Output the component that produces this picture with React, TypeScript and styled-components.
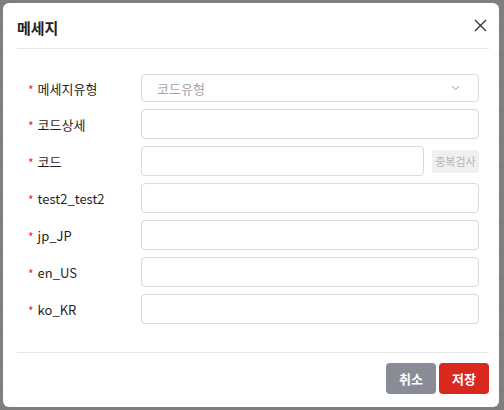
import React from 'react';
import styled, { createGlobalStyle } from 'styled-components';

const GlobalStyle = createGlobalStyle`
  html, body {
    margin: 0;
    padding: 0;
    height: 100%;
  }
  body {
    font-family: "Noto Sans CJK KR", "Noto Sans", sans-serif;
    background: #7d7d7d;
  }
  #root {
    height: 100%;
  }
`;

const Backdrop = styled.div`
  box-sizing: border-box;
  height: 100%;
  padding: 3px 5px 3px 3px;
  background: repeating-linear-gradient(
    to bottom,
    #7f7f7f 0px,
    #7f7f7f 26px,
    #767676 27px,
    #7f7f7f 28px
  );
`;

const Modal = styled.div`
  box-sizing: border-box;
  height: 404px;
  background: #fff;
  border-radius: 6px;
  padding: 0 10px 0 14px;
  display: flex;
  flex-direction: column;
`;

const Header = styled.div`
  height: 45px;
  display: flex;
  align-items: center;
  justify-content: space-between;
  border-bottom: 1px solid #e6e6e9;
`;

const Title = styled.h2`
  margin: 0;
  padding-top: 3px;
  font-size: 15px;
  font-weight: 700;
  color: #222;
`;

const CloseButton = styled.button`
  border: none;
  background: none;
  padding: 0;
  margin: 0 0 1px 0;
  width: 18px;
  height: 18px;
  display: flex;
  align-items: center;
  justify-content: center;
  cursor: pointer;
`;

const Body = styled.div`
  flex: 1;
  padding: 25px 10px 0 0;
  display: flex;
  flex-direction: column;
  gap: 7px;
`;

const Row = styled.div`
  display: flex;
  align-items: center;
`;

const Label = styled.label`
  width: 124px;
  flex-shrink: 0;
  padding-left: 11px;
  box-sizing: border-box;
  font-size: 13px;
  color: #1f1f1f;
  display: flex;
  align-items: center;
`;

const Star = styled.span`
  color: #f5222d;
  font-size: 12px;
  margin-right: 4px;
  position: relative;
  top: 1px;
`;

const Field = styled.div`
  flex: 1;
  display: flex;
  align-items: center;
  gap: 8px;
`;

const Input = styled.input`
  flex: 1;
  min-width: 0;
  box-sizing: border-box;
  height: 30px;
  border: 1px solid #d9d9de;
  border-radius: 4px;
  padding: 0 10px;
  font-family: inherit;
  font-size: 13px;
  outline: none;
`;

const Select = styled.div`
  flex: 1;
  box-sizing: border-box;
  height: 28px;
  border: 1px solid #d9d9de;
  border-radius: 4px;
  padding: 0 18px 0 15px;
  display: flex;
  align-items: center;
  justify-content: space-between;
  font-size: 13px;
  color: #a3a3a8;
`;

const CheckButton = styled.button`
  width: 47px;
  height: 23px;
  border: none;
  border-radius: 3px;
  background: #f0f0f2;
  color: #b4b4b8;
  font-family: inherit;
  font-size: 11px;
  padding: 0;
`;

const Footer = styled.div`
  border-top: 1px solid #e6e6e9;
  height: 55px;
  display: flex;
  justify-content: flex-end;
  align-items: flex-start;
  padding-top: 10px;
  box-sizing: border-box;
  gap: 3px;
`;

const ActionButton = styled.button<{ $tone: 'gray' | 'red' }>`
  width: 50px;
  height: 31px;
  border: none;
  border-radius: 4px;
  background: ${(p) => (p.$tone === 'red' ? '#d9291f' : '#898c97')};
  color: #fff;
  font-family: inherit;
  font-size: 13px;
  font-weight: 700;
  padding: 0;
`;

const fields = ['코드상세', '코드', 'test2_test2', 'jp_JP', 'en_US', 'ko_KR'];

export default function App() {
  return (
    <>
      <GlobalStyle />
      <Backdrop>
        <Modal>
          <Header>
            <Title>메세지</Title>
            <CloseButton aria-label="close">
              <svg width="13" height="13" viewBox="0 0 13 13">
                <path d="M1 1L12 12M12 1L1 12" stroke="#333" strokeWidth="1.3" fill="none" />
              </svg>
            </CloseButton>
          </Header>
          <Body>
            <Row>
              <Label>
                <Star>*</Star>메세지유형
              </Label>
              <Field>
                <Select>
                  <span>코드유형</span>
                  <svg width="9" height="6" viewBox="0 0 9 6">
                    <path d="M1 1L4.5 4.5L8 1" stroke="#999" strokeWidth="1" fill="none" />
                  </svg>
                </Select>
              </Field>
            </Row>
            {fields.map((f) => (
              <Row key={f}>
                <Label>
                  <Star>*</Star>
                  {f}
                </Label>
                <Field>
                  <Input />
                  {f === '코드' && <CheckButton>중복검사</CheckButton>}
                </Field>
              </Row>
            ))}
          </Body>
          <Footer>
            <ActionButton $tone="gray">취소</ActionButton>
            <ActionButton $tone="red">저장</ActionButton>
          </Footer>
        </Modal>
      </Backdrop>
    </>
  );
}
